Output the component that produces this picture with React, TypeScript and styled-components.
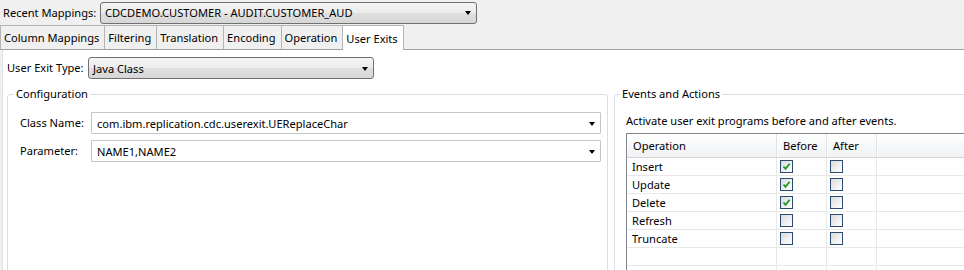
import styled, { createGlobalStyle } from "styled-components";

const GlobalStyle = createGlobalStyle`
  html, body {
    margin: 0;
    padding: 0;
    background: #f0f0f0;
  }
  body {
    font-family: "Noto Sans", "Open Sans", sans-serif;
    font-size: 11.1px;
    color: #000;
    overflow: hidden;
  }
`;

const Window = styled.div`
  width: 964px;
  height: 270px;
  overflow: hidden;
  background: #f0f0f0;
  display: flex;
  flex-direction: column;
`;

const TopBar = styled.div`
  height: 25px;
  display: flex;
  align-items: center;
  padding-left: 3px;
`;

const Label = styled.span<{ $width: number }>`
  width: ${({ $width }) => $width}px;
  flex-shrink: 0;
  white-space: nowrap;
  line-height: 16px;
`;

const Combo = styled.div<{ $width: number; $editable?: boolean }>`
  width: ${({ $width }) => $width}px;
  height: 22px;
  box-sizing: border-box;
  display: flex;
  align-items: center;
  justify-content: space-between;
  padding: 0 5px 0 ${({ $editable }) => ($editable ? 5 : 4)}px;
  border: 1px solid ${({ $editable }) => ($editable ? "#c3c6cc" : "#707070")};
  border-radius: ${({ $editable }) => ($editable ? 1 : 3)}px;
  background: ${({ $editable }) =>
    $editable
      ? "#fff"
      : "linear-gradient(#f4f4f4 0%, #ececec 50%, #e0e0e0 51%, #d6d6d6 100%)"};
  white-space: nowrap;
`;

const Arrow = styled.span`
  width: 0;
  height: 0;
  border-left: 3.5px solid transparent;
  border-right: 3.5px solid transparent;
  border-top: 4px solid #000;
  margin-top: 1px;
`;

const TabStrip = styled.div`
  height: 25px;
  box-sizing: border-box;
  display: flex;
  align-items: flex-end;
  border-bottom: 1px solid #a0a0a0;
`;

const Tab = styled.div<{ $active?: boolean }>`
  box-sizing: border-box;
  padding: 0 5px 0 3px;
  display: flex;
  align-items: center;
  white-space: nowrap;
  border-top: 1px solid #b4b4b4;
  border-right: 1px solid #b4b4b4;
  background: ${({ $active }) => ($active ? "#fff" : "#f0f0f0")};
  margin-bottom: ${({ $active }) => ($active ? "-1px" : "0")};
  height: ${({ $active }) => ($active ? "25px" : "24px")};
  &:first-child {
    border-left: 1px solid #b4b4b4;
  }
`;

const Body = styled.div`
  flex: 1;
  margin-left: 2px;
  background: #fff;
  border-left: 1px solid #e2e2e2;
  padding: 7px 0 0 4px;
  display: flex;
  flex-direction: column;
  min-height: 0;
`;

const FieldRow = styled.div<{ $gap?: number }>`
  display: flex;
  align-items: center;
  margin-top: ${({ $gap }) => $gap ?? 0}px;
`;

const Groups = styled.div`
  display: flex;
  gap: 6px;
  margin-top: 7px;
`;

const Group = styled.fieldset<{ $width: number; $padLeft: number }>`
  width: ${({ $width }) => $width}px;
  height: 220px;
  flex-shrink: 0;
  box-sizing: border-box;
  margin: 0;
  padding: 10px 6px 0 ${({ $padLeft }) => $padLeft}px;
  border: 1px solid #d5dfe5;
  border-radius: 3px;
  min-width: 0;
`;

const Legend = styled.legend`
  padding: 0 2px;
  margin-left: -6px;
  line-height: 16px;
`;

const Hint = styled.div`
  line-height: 16px;
  margin-top: 1px;
`;

const Grid = styled.div`
  margin-top: 4px;
  width: 420px;
  border-top: 1px solid #828790;
  border-left: 1px solid #828790;
`;

const GridRow = styled.div<{ $header?: boolean }>`
  display: grid;
  grid-template-columns: 150px 50px 50px 1fr;
  height: ${({ $header }) => ($header ? 24 : 18)}px;
  box-sizing: border-box;
  border-bottom: 1px solid ${({ $header }) => ($header ? "#d5d5d5" : "#e8e8e8")};
  background: ${({ $header }) =>
    $header ? "linear-gradient(#ffffff 0%, #f7f8f9 50%, #f1f2f4 100%)" : "#fff"};
`;

const Cell = styled.div<{ $header?: boolean }>`
  display: flex;
  align-items: center;
  padding-left: ${({ $header }) => ($header ? 6 : 5)}px;
  border-right: 1px solid ${({ $header }) => ($header ? "#dfe2e6" : "#e8e8e8")};
  box-shadow: ${({ $header }) => ($header ? "1px 0 0 #fff" : "none")};
  white-space: nowrap;
  line-height: 16px;
`;

const Box = styled.span`
  width: 13px;
  height: 13px;
  box-sizing: border-box;
  border: 1px solid #2b4a6f;
  background: linear-gradient(135deg, #d9d9d9 0%, #f2f2f2 60%, #ffffff 100%);
  margin-left: -2px;
  display: flex;
  align-items: center;
  justify-content: center;
`;

function Checkbox({ checked }: { checked: boolean }) {
  return (
    <Box>
      {checked && (
        <svg width="9" height="9" viewBox="0 0 9 9">
          <path
            d="M1.5 4.5 L3.5 6.8 L7.6 1.8"
            fill="none"
            stroke="#1f9a1f"
            strokeWidth="1.8"
          />
        </svg>
      )}
    </Box>
  );
}

const tabs = [
  "Column Mappings",
  "Filtering",
  "Translation",
  "Encoding",
  "Operation",
  "User Exits",
];

const events = [
  { name: "Insert", before: true, after: false },
  { name: "Update", before: true, after: false },
  { name: "Delete", before: true, after: false },
  { name: "Refresh", before: false, after: false },
  { name: "Truncate", before: false, after: false },
];

export default function App() {
  return (
    <Window>
      <GlobalStyle />
      <TopBar>
        <Label $width={97}>Recent Mappings:</Label>
        <Combo $width={377}>
          CDCDEMO.CUSTOMER - AUDIT.CUSTOMER_AUD
          <Arrow />
        </Combo>
      </TopBar>

      <TabStrip>
        {tabs.map((t) => (
          <Tab key={t} $active={t === "User Exits"}>
            {t}
          </Tab>
        ))}
      </TabStrip>

      <Body>
        <FieldRow>
          <Label $width={81}>User Exit Type:</Label>
          <Combo $width={286}>
            Java Class
            <Arrow />
          </Combo>
        </FieldRow>

        <Groups>
          <Group $width={601} $padLeft={12}>
            <Legend>Configuration</Legend>
            <FieldRow>
              <Label $width={71}>Class Name:</Label>
              <Combo $width={510} $editable>
                com.ibm.replication.cdc.userexit.UEReplaceChar
                <Arrow />
              </Combo>
            </FieldRow>
            <FieldRow $gap={6}>
              <Label $width={71}>Parameter:</Label>
              <Combo $width={510} $editable>
                NAME1,NAME2
                <Arrow />
              </Combo>
            </FieldRow>
          </Group>

          <Group $width={420} $padLeft={11}>
            <Legend>Events and Actions</Legend>
            <Hint>Activate user exit programs before and after events.</Hint>
            <Grid>
              <GridRow $header>
                <Cell $header>Operation</Cell>
                <Cell $header>Before</Cell>
                <Cell $header>After</Cell>
                <Cell $header />
              </GridRow>
              {events.map((e) => (
                <GridRow key={e.name}>
                  <Cell>{e.name}</Cell>
                  <Cell>
                    <Checkbox checked={e.before} />
                  </Cell>
                  <Cell>
                    <Checkbox checked={e.after} />
                  </Cell>
                  <Cell />
                </GridRow>
              ))}
              {[0, 1].map((i) => (
                <GridRow key={i}>
                  <Cell />
                  <Cell />
                  <Cell />
                  <Cell />
                </GridRow>
              ))}
            </Grid>
          </Group>
        </Groups>
      </Body>
    </Window>
  );
}
